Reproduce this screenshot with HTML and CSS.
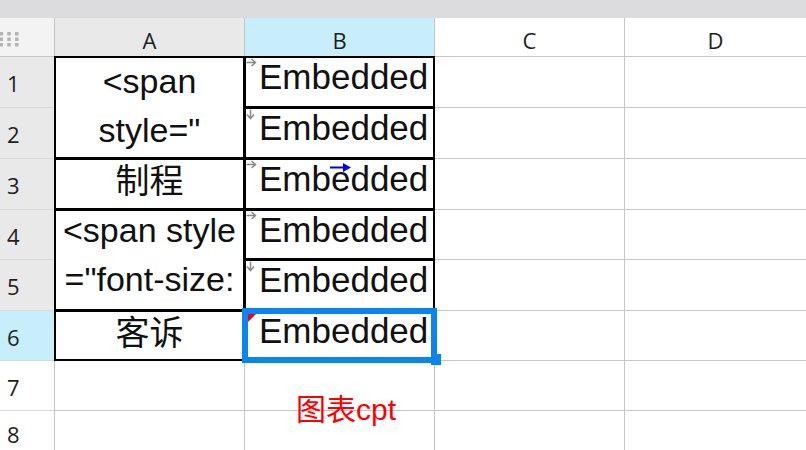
FILE: index.html
```html
<!DOCTYPE html>
<html lang="zh">
<head>
<meta charset="utf-8">
<title>Sheet</title>
<link rel="stylesheet" href="styles.css">
</head>
<body>
<div class="topbar"></div>
<div class="sheet">
  <div class="corner">
    <svg class="dots" width="20" height="15" viewBox="0 0 20 15">
      <g fill="#b4b4b6">
        <rect x="-0.5" y="0" width="3.5" height="3.5"/><rect x="7.3" y="0" width="3.5" height="3.5"/><rect x="15" y="0" width="3.5" height="3.5"/>
        <rect x="-0.5" y="5.5" width="3.5" height="3.5"/><rect x="7.3" y="5.5" width="3.5" height="3.5"/><rect x="15" y="5.5" width="3.5" height="3.5"/>
        <rect x="-0.5" y="11" width="3.5" height="3.5"/><rect x="7.3" y="11" width="3.5" height="3.5"/><rect x="15" y="11" width="3.5" height="3.5"/>
      </g>
    </svg>
  </div>
  <div class="colhead used">A</div>
  <div class="colhead active">B</div>
  <div class="colhead">C</div>
  <div class="colhead">D</div>

  <!-- row 1 -->
  <div class="rowhead used">1</div>
  <div class="cell txt bordered span2"><div class="lines">&lt;span<br>style="</div></div>
  <div class="cell emb bordered"><svg class="mark" width="11" height="9" viewBox="0 0 11 9"><path d="M0.5 4.5H9M5.5 1L9.5 4.5L5.5 8" fill="none" stroke="#888" stroke-width="1.5"/></svg>Embedded</div>
  <div class="cell"></div>
  <div class="cell"></div>

  <!-- row 2 -->
  <div class="rowhead used">2</div>
  <div class="cell emb bordered"><svg class="mark" width="9" height="11" viewBox="0 0 9 11"><path d="M4.5 0.5V9M1 5.5L4.5 9.5L8 5.5" fill="none" stroke="#888" stroke-width="1.5"/></svg>Embedded</div>
  <div class="cell"></div>
  <div class="cell"></div>

  <!-- row 3 -->
  <div class="rowhead used">3</div>
  <div class="cell txt single bordered">制程</div>
  <div class="cell emb bordered"><svg class="mark" width="11" height="9" viewBox="0 0 11 9"><path d="M0.5 4.5H9M5.5 1L9.5 4.5L5.5 8" fill="none" stroke="#888" stroke-width="1.5"/></svg>Embedded<svg class="flow" width="21" height="11" viewBox="0 0 21 11"><path d="M0 5.5H15" stroke="#0000ff" stroke-width="2"/><path d="M13 1L21 5.5L13 10Z" fill="#0000ff"/></svg></div>
  <div class="cell"></div>
  <div class="cell"></div>

  <!-- row 4 -->
  <div class="rowhead used">4</div>
  <div class="cell txt bordered span2"><div class="lines up">&lt;span style<br>="font-size:</div></div>
  <div class="cell emb bordered"><svg class="mark" width="11" height="9" viewBox="0 0 11 9"><path d="M0.5 4.5H9M5.5 1L9.5 4.5L5.5 8" fill="none" stroke="#888" stroke-width="1.5"/></svg>Embedded</div>
  <div class="cell"></div>
  <div class="cell"></div>

  <!-- row 5 -->
  <div class="rowhead used">5</div>
  <div class="cell emb bordered"><svg class="mark" width="9" height="11" viewBox="0 0 9 11"><path d="M4.5 0.5V9M1 5.5L4.5 9.5L8 5.5" fill="none" stroke="#888" stroke-width="1.5"/></svg>Embedded</div>
  <div class="cell"></div>
  <div class="cell"></div>

  <!-- row 6 -->
  <div class="rowhead active">6</div>
  <div class="cell txt single bordered">客诉</div>
  <div class="cell emb selected"><span class="comment"></span>Embedded<span class="handle"></span></div>
  <div class="cell"></div>
  <div class="cell"></div>

  <!-- row 7 -->
  <div class="rowhead">7</div>
  <div class="cell"></div>
  <div class="cell"></div>
  <div class="cell"></div>
  <div class="cell"></div>

  <!-- row 8 -->
  <div class="rowhead last">8</div>
  <div class="cell"></div>
  <div class="cell"></div>
  <div class="cell"></div>
  <div class="cell"></div>

  <div class="chart-label">图表cpt</div>
</div>
</body>
</html>
```

FILE: styles.css
```css
html, body {
  margin: 0;
  padding: 0;
  width: 806px;
  height: 450px;
  overflow: hidden;
  background: #ffffff;
}

.topbar {
  height: 18px;
  background: #dcdcde;
}

.sheet {
  position: relative;
  height: 432px;
  display: grid;
  grid-template-columns: 54px 189px 189px 189px 1fr;
  grid-template-rows: 38px 50px 50px 50px 49px 50px 49px 49px 1fr;
  gap: 1px;
  background: #c6c6c6;
  font-family: "Liberation Sans", "Noto Sans CJK SC", sans-serif;
  color: #111;
}

.corner {
  background: #f3f3f3;
  position: relative;
}

.dots {
  position: absolute;
  left: 0;
  top: 14px;
}

.colhead {
  background: #ffffff;
  font-family: "Open Sans", "Noto Sans", sans-serif;
  font-size: 22px;
  color: #1e1e1e;
  text-align: center;
  line-height: 44px;
}

.colhead.used { background: #e9e9e9; }
.colhead.active { background: #c7eefa; }

.rowhead {
  background: #ffffff;
  font-family: "Open Sans", "Noto Sans", sans-serif;
  font-size: 22px;
  color: #1e1e1e;
  padding-left: 7px;
  padding-top: 13px;
  line-height: 26px;
  box-shadow: 0 1px 0 #d9d9de;
}

.rowhead.last { padding-top: 10px; }
.rowhead.used { background: #e9e9e9; }
.rowhead.active { background: #c7eefa; }

.cell {
  background: #ffffff;
  min-width: 0;
}

.bordered {
  outline: 2px solid #000;
  outline-offset: -1px;
}

.txt {
  font-size: 34px;
  text-align: center;
  white-space: nowrap;
  overflow: hidden;
  line-height: 49px;
}

.span2 { grid-row: span 2; }
.lines.up { margin-top: -4px; }
.single { line-height: 44px; }

.emb {
  position: relative;
  font-size: 35px;
  line-height: 40px;
  padding-left: 14px;
  white-space: nowrap;
}

.mark {
  position: absolute;
  left: 1px;
  top: 1px;
}

.flow {
  position: absolute;
  left: 85px;
  top: 3px;
}

.selected {
  outline: 6px solid #0a84ee;
  outline-offset: -3px;
}

.comment {
  position: absolute;
  left: 3px;
  top: 3px;
  width: 0;
  height: 0;
  border-top: 8px solid #f00020;
  border-right: 8px solid transparent;
}

.handle {
  position: absolute;
  left: 186px;
  top: 43px;
  width: 10px;
  height: 11px;
  background: #0a84ee;
  z-index: 2;
}

.chart-label {
  position: absolute;
  left: 296px;
  top: 376px;
  font-size: 30px;
  line-height: 32px;
  color: #ff0000;
  white-space: nowrap;
  z-index: 3;
}
```
